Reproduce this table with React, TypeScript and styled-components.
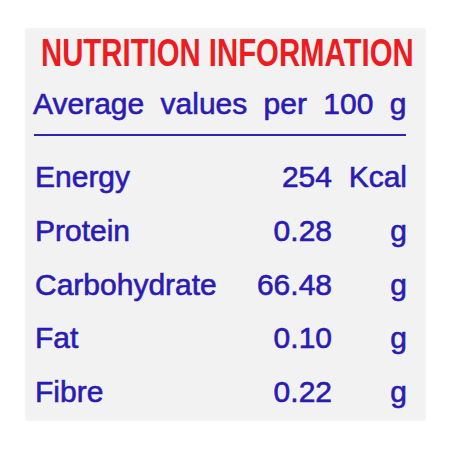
import React from "react";
import styled, { createGlobalStyle } from "styled-components";

const Global = createGlobalStyle`
  html, body { margin: 0; padding: 0; background: #ffffff; }
  body { width: 450px; height: 450px; overflow: hidden; }
`;

const Page = styled.div`
  padding: 29px 0 0 26px;
`;

const Panel = styled.div`
  box-sizing: border-box;
  width: 399px;
  height: 391px;
  background: #f2f2f2;
  box-shadow: 0 0 2px rgba(0, 0, 0, 0.12);
  padding: 0 18px 0 6px;
  font-family: "Liberation Sans", Arial, sans-serif;
  color: #2a1bb3;
  display: flex;
  flex-direction: column;
  overflow: hidden;
`;

const TitleRow = styled.div`
  height: 43px;
`;

const Title = styled.div`
  display: inline-block;
  margin: 5px 0 0 9px;
  font-size: 38px;
  line-height: 38px;
  font-weight: 700;
  color: #ec1c1f;
  white-space: nowrap;
  transform: scaleX(0.772);
  transform-origin: left center;
`;

const Subtitle = styled.div`
  margin: 17px 0 0 1px;
  font-size: 30px;
  line-height: 30px;
  word-spacing: 8px;
  white-space: nowrap;
  -webkit-text-stroke: 0.6px currentColor;
`;

const Rule = styled.div`
  margin: 15px 1px 0 2px;
  height: 2px;
  background: #2e22b0;
`;

const Table = styled.div`
  margin-top: 14px;
  display: grid;
  grid-template-columns: 1fr 110px 75px;
  padding-left: 3px;
`;

const Cell = styled.div<{ $align?: "left" | "right" }>`
  font-size: 30px;
  line-height: 53.75px;
  height: 53.75px;
  text-align: ${(p) => p.$align ?? "left"};
  white-space: nowrap;
  -webkit-text-stroke: 0.6px currentColor;
`;

const rows = [
  { name: "Energy", value: "254", unit: "Kcal" },
  { name: "Protein", value: "0.28", unit: "g" },
  { name: "Carbohydrate", value: "66.48", unit: "g" },
  { name: "Fat", value: "0.10", unit: "g" },
  { name: "Fibre", value: "0.22", unit: "g" },
];

export default function App() {
  return (
    <>
      <Global />
      <Page>
        <Panel>
          <TitleRow>
            <Title>NUTRITION INFORMATION</Title>
          </TitleRow>
          <Subtitle>Average values per 100 g</Subtitle>
          <Rule />
          <Table>
            {rows.map((r) => (
              <React.Fragment key={r.name}>
                <Cell>{r.name}</Cell>
                <Cell $align="right">{r.value}</Cell>
                <Cell $align="right">{r.unit}</Cell>
              </React.Fragment>
            ))}
          </Table>
        </Panel>
      </Page>
    </>
  );
}
